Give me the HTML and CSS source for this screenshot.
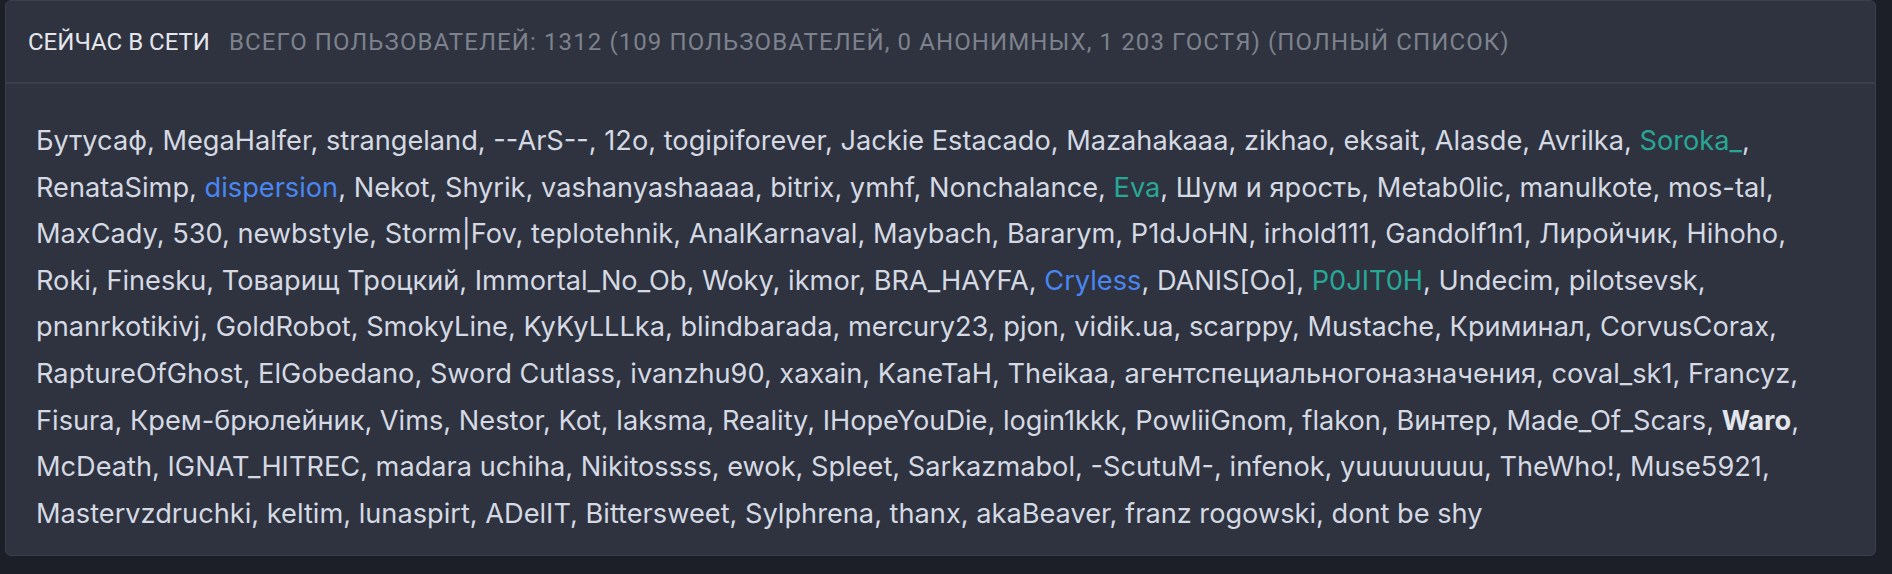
FILE: index.html
```html
<!DOCTYPE html>
<html lang="ru">
<head>
<meta charset="utf-8">
<title>Сейчас в сети</title>
<link rel="stylesheet" href="styles.css">
</head>
<body>
<section class="panel">
  <header class="panel-head">
    <span class="head-title">СЕЙЧАС В СЕТИ</span>
    <span class="head-stats">ВСЕГО ПОЛЬЗОВАТЕЛЕЙ: 1312 (109 ПОЛЬЗОВАТЕЛЕЙ, 0 АНОНИМНЫХ, 1 203 ГОСТЯ) (ПОЛНЫЙ СПИСОК)</span>
  </header>
  <div class="panel-body">
    <p class="users">Бутусаф, MegaHalfer, strangeland, --ArS--, 12o, togipiforever, Jackie Estacado, Mazahakaaa, zikhao, eksait, Alasde, Avrilka, <span class="u-green">Soroka_</span>, RenataSimp, <span class="u-blue">dispersion</span>, Nekot, Shyrik, vashanyashaaaa, bitrix, ymhf, Nonchalance, <span class="u-green">Eva</span>, Шум и ярость, Metab0lic, manulkote, <span class="nb">mos-tal</span>, MaxCady, 530, newbstyle, Storm|Fov, teplotehnik, AnalKarnaval, Maybach, Bararym, P1dJoHN, irhold111, Gandolf1n1, Лиройчик, Hihoho, Roki, Finesku, Товарищ Троцкий, Immortal_No_Ob, Woky, ikmor, BRA_HAYFA, <span class="u-blue">Cryless</span>, DANIS[Oo], <span class="u-green">P0JIT0H</span>, Undecim, pilotsevsk, pnanrkotikivj, GoldRobot, SmokyLine, KyKyLLLka, blindbarada, mercury23, pjon, vidik.ua, scarppy, Mustache, Криминал, CorvusCorax, RaptureOfGhost, ElGobedano, Sword Cutlass, ivanzhu90, xaxain, KaneTaH, Theikaa, агентспециальногоназначения, coval_sk1, Francyz, Fisura, <span class="nb">Крем-брюлейник</span>, Vims, Nestor, Kot, laksma, Reality, IHopeYouDie, login1kkk, PowliiGnom, flakon, Винтер, Made_Of_Scars, <span class="u-bold">Waro</span>, McDeath, IGNAT_HITREC, madara uchiha, Nikitossss, ewok, Spleet, Sarkazmabol, <span class="nb">-ScutuM-</span>, infenok, yuuuuuuuu, TheWho!, Muse5921, Mastervzdruchki, keltim, lunaspirt, ADelIT, Bittersweet, Sylphrena, thanx, akaBeaver, franz rogowski, dont be shy</p>
  </div>
</section>
</body>
</html>
```

FILE: styles.css
```css
* {
  box-sizing: border-box;
}

html, body {
  margin: 0;
  padding: 0;
  background: #1c1f28;
}

body {
  padding: 0 16px 0 5px;
  height: 574px;
  overflow: hidden;
}

.panel {
  background: #2e333f;
  border: 1px solid #3a3f4b;
  border-radius: 6px;
  height: 556px;
  display: flex;
  flex-direction: column;
}

.panel-head {
  flex: 0 0 83px;
  border-bottom: 2px solid #3a3f4b;
  display: flex;
  align-items: center;
  gap: 19px;
  padding: 1px 0 0 22px;
  font-family: Roboto, "Noto Sans", sans-serif;
  font-size: 24px;
  white-space: nowrap;
}

.head-title {
  color: #e4e6ec;
}

.head-stats {
  color: #7d828d;
  letter-spacing: 1.1px;
}

.panel-body {
  flex: 1;
  padding: 34px 24px 0 30px;
}

.users {
  margin: 0;
  font-family: Inter, "Noto Sans", sans-serif;
  font-size: 27.2px;
  line-height: 46.6px;
  color: #d5d9e3;
}

.nb {
  white-space: nowrap;
}

.u-green {
  color: #28a796;
}

.u-blue {
  color: #4a86f2;
}

.u-bold {
  font-weight: 700;
  color: #e2e5ec;
}
```
